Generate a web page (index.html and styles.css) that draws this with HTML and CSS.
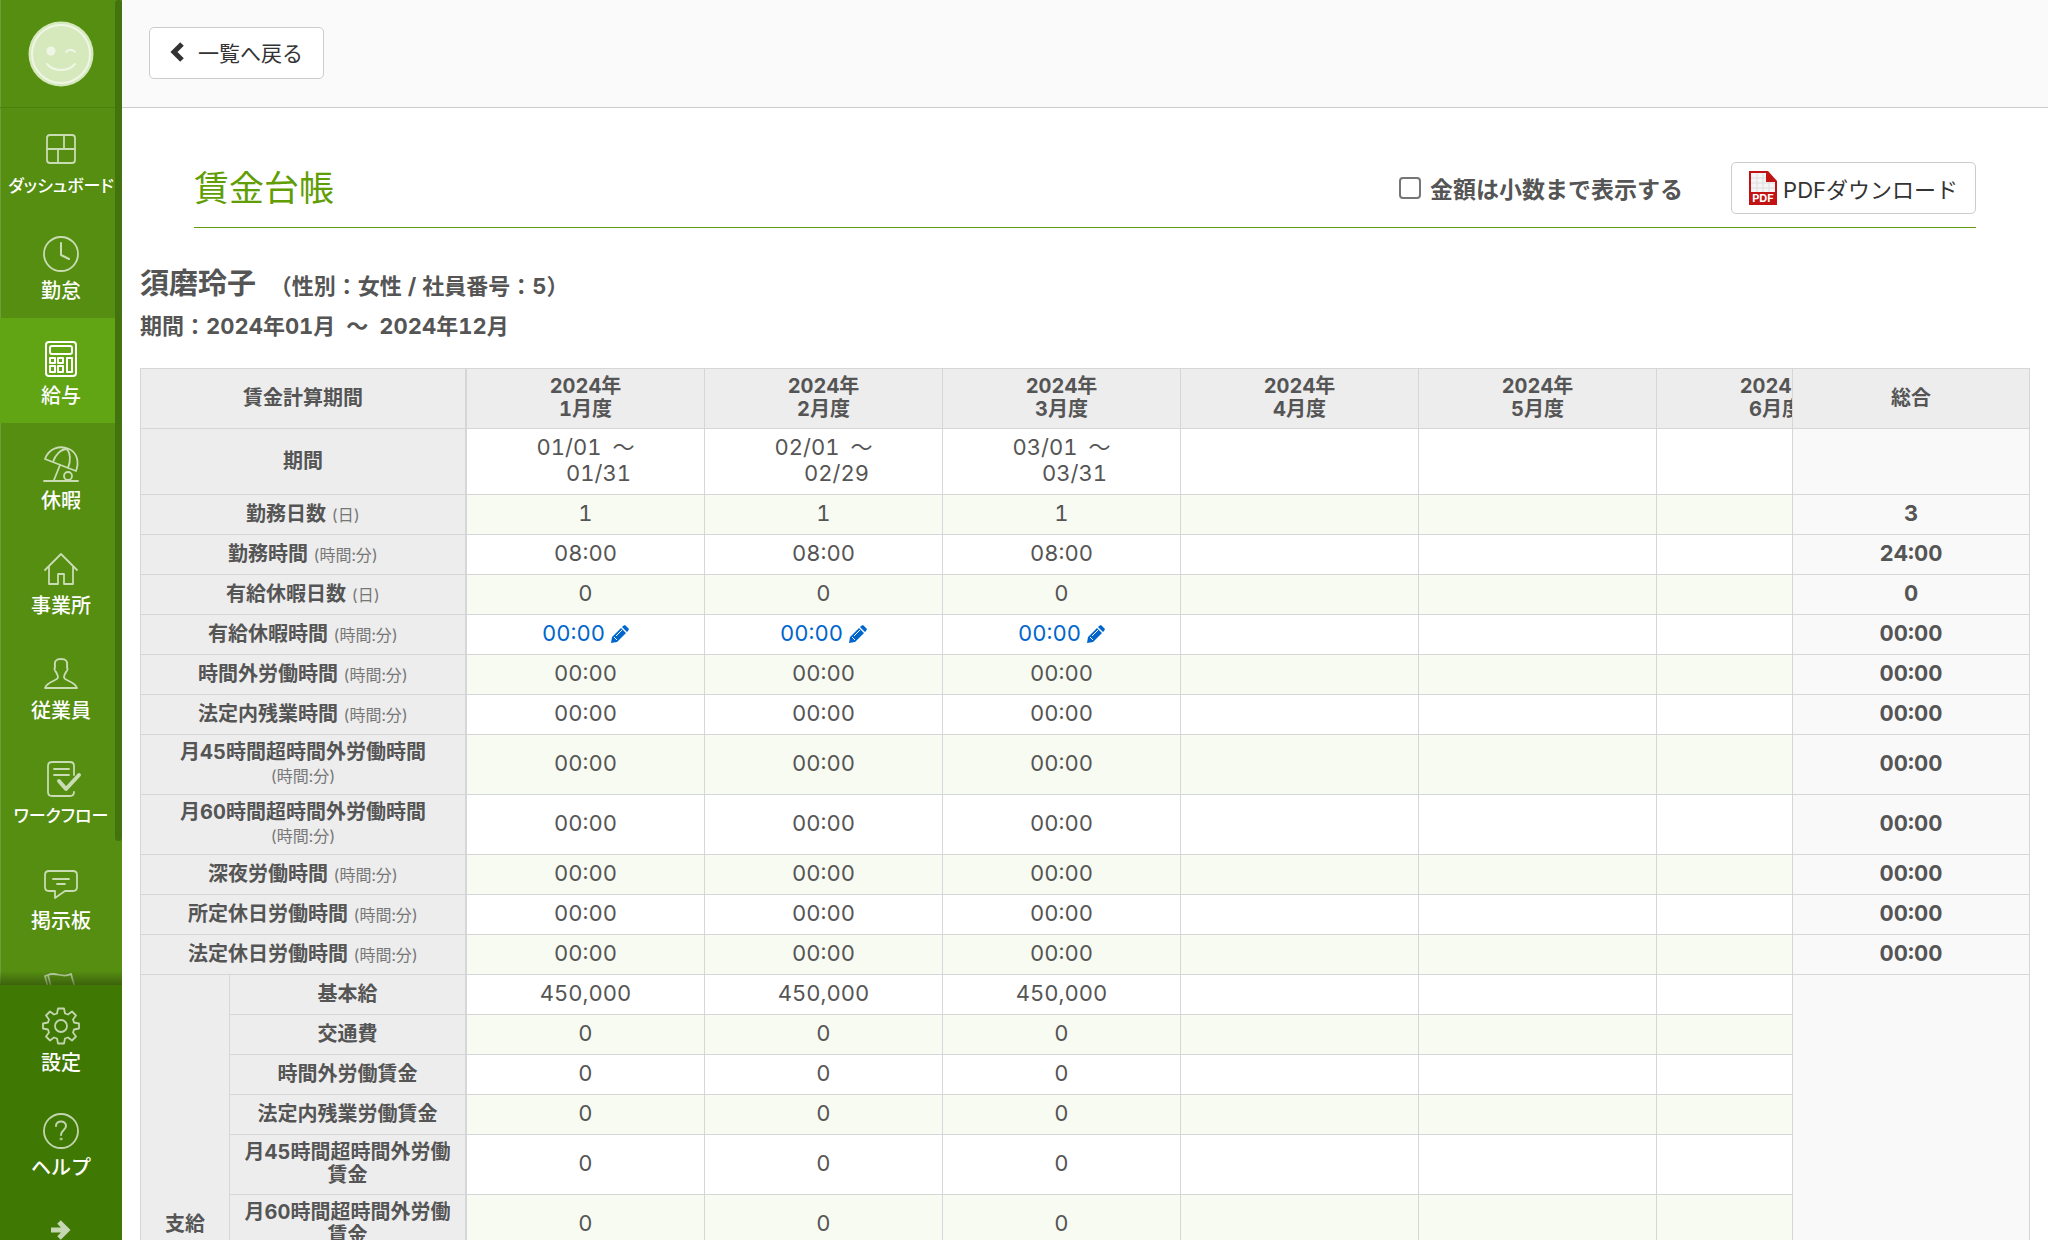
FILE: index.html
```html
<!DOCTYPE html>
<html lang="ja">
<head>
    <meta charset="UTF-8">
    <meta name="viewport" content="width=device-width, initial-scale=1.0">
    <title>賃金台帳</title>
    <link rel="stylesheet" href="styles.css">
</head>
<body>
<div class="container">
    <div class="sidebar">
        <div class="menu">
            <a class="user" href="#" aria-label="ユーザー">
                <svg width="66" height="66" viewBox="0 0 66 66" fill="none" stroke="#eff6e6" stroke-width="2" stroke-linecap="round">
                    <circle cx="33" cy="33" r="32.5" fill="#d6e9bd" stroke="none"/>
                    <circle cx="33" cy="33" r="29"/>
                    <circle cx="23" cy="30" r="4.5" fill="#eff6e6" stroke="none"/>
                    <path d="M38 31c2-3 7-3 9 0M19 43c7 8 21 8 28 0"/>
                </svg>
            </a>
            <a class="item" href="#">
                <svg class="icon" viewBox="0 0 36 36"><rect x="4" y="4" width="28" height="28" rx="3"/><path d="M4 18h28M21 4v14M15 18v14"/></svg>
                <span class="kana">ダッシュボード</span>
            </a>
            <a class="item" href="#">
                <svg class="icon" viewBox="0 0 36 36"><circle cx="18" cy="18" r="17"/><path d="M18 7v12l8 4" stroke-width="2"/></svg>
                <span>勤怠</span>
            </a>
            <a class="item active" href="#">
                <svg class="icon" viewBox="0 0 36 36"><rect x="3" y="1" width="30" height="34" rx="3"/><rect x="7" y="5" width="22" height="8" rx="2"/><rect x="7" y="17" width="5" height="5"/><rect x="15" y="17" width="5" height="5"/><rect x="7" y="25" width="5" height="6"/><rect x="15" y="25" width="5" height="6"/><rect x="24" y="17" width="5" height="14"/></svg>
                <span>給与</span>
            </a>
            <a class="item" href="#">
                <svg class="icon" viewBox="0 0 36 36"><path d="M2 13C6 2 17-1 26 3s10 14 7 22zM10 16C12 9 18 3 24 3M25 22c3-8 2-15-1-19M17 19l-6 15M1 35h34"/><circle cx="25" cy="30" r="4"/></svg>
                <span>休暇</span>
            </a>
            <a class="item" href="#">
                <svg class="icon" viewBox="0 0 36 36"><path d="M2 19L18 3l16 16M6 16v17h9V23h6v10h9V16"/></svg>
                <span>事業所</span>
            </a>
            <a class="item" href="#">
                <svg class="icon" viewBox="0 0 36 36"><path d="M18 3c-5 0-7 2-6 8-1 2 0 4 1 5 1 2 2 3 2 5 0 4-11 4-13 11h32c-2-7-13-7-13-11 0-2 1-3 2-5 1-1 2-3 1-5 1-6-1-8-6-8z"/></svg>
                <span>従業員</span>
            </a>
            <a class="item" href="#">
                <svg class="icon" viewBox="0 0 36 36"><path d="M31 14V5c0-3-1-4-4-4H9C6 1 5 2 5 5v26c0 3 1 4 4 4h18c3 0 4-1 4-4M11 8h15M11 14h15"/><path d="M16 20l7 8 13-14" stroke-width="4"/></svg>
                <span class="kana">ワークフロー</span>
            </a>
            <a class="item" href="#">
                <svg class="icon" viewBox="0 0 36 36"><path d="M6 5h24c3 0 4 1 4 4v12c0 3-1 4-4 4h-8l-10 7v-7H6c-3 0-4-1-4-4V9c0-3 1-4 4-4zM10 13h16M14 18h8"/></svg>
                <span>掲示板</span>
            </a>
            <a class="item" href="#" aria-label="申請">
                <svg class="icon" viewBox="0 0 36 36"><path d="M2 5l3-1 8 31-3 1zM5 4c8-4 14 4 23-1l5 17c-9 5-15-3-24 1"/></svg>
            </a>
            <div class="scroll-thumb"></div>
        </div>
        <div class="menu-bottom">
            <a class="item" href="#">
                <svg class="icon" viewBox="0 0 36 36"><circle cx="18" cy="18" r="6"/><path d="M15 0.5h6l1 5 3 1 4-3 4 4-3 4 1 3 5 1v5l-5 1-1 3 3 4-4 4-4-3-3 1-1 5h-6l-1-5-3-1-4 3-4-4 3-4-1-3-5-1v-5l5-1 1-3-3-4 4-4 4 3 3-1z"/></svg>
                <span>設定</span>
            </a>
            <a class="item" href="#">
                <svg class="icon" viewBox="0 0 36 36"><circle cx="18" cy="18" r="17"/><path d="M13 13c0-6 10-6 10 0 0 4-5 4-5 9" stroke-width="2"/><circle cx="18" cy="26" r="1" stroke-width="1"/></svg>
                <span>ヘルプ</span>
            </a>
            <button class="toggle" type="button" aria-label="メニューを開く">
                <svg width="20" height="20" viewBox="0 0 20 20" fill="none" stroke="#c6d7b3" stroke-width="5"><path d="M0 10h16M8 2l8 8-8 8"/></svg>
            </button>
        </div>
    </div>

    <div class="main">
        <div class="top">
            <button class="btn" type="button">
                <svg class="back-icon" width="14" height="20" viewBox="0 0 14 20" fill="none" stroke="#333" stroke-width="5"><path d="M12 2l-8 8 8 8"/></svg>
                一覧へ戻る
            </button>
        </div>
        <div class="content">
            <div class="title">
                <h1>賃金台帳</h1>
                <label class="check"><input type="checkbox">金額は小数まで表示する</label>
                <button class="btn pdf" type="button">
                    <svg width="28" height="34" viewBox="0 0 28 34">
                        <path d="M0 0h19l9 10v24H0z" fill="#c11313"/>
                        <path d="M2 2h15v9h9v10H2z" fill="#f5f5f5"/>
                        <path d="M2 7h15M2 12h24M2 17h24M8 2v19M14 2v19M20 11v10" stroke="#ddd"/>
                        <text x="14" y="31" text-anchor="middle" class="pdf-mark">PDF</text>
                    </svg>
                    PDFダウンロード
                </button>
            </div>
            <h2>須磨玲子 <small>（性別：女性 / 社員番号：5）</small></h2>
            <p class="period">期間：2024年01月&ensp;〜&ensp;2024年12月</p>
            <div class="table-wrap">
                <table>
                    <colgroup>
                        <col class="col-group">
                        <col class="col-label">
                        <col span="13" class="col-month">
                    </colgroup>
                    <thead>
                        <tr id="head">
                            <th class="label" colspan="2">賃金計算期間</th>
                        </tr>
                    </thead>
                    <tbody id="body"></tbody>
                </table>
            </div>
        </div>
    </div>
</div>
<script>
    var MONTHS = 12;
    var pen = '<svg class="pen" width="18" height="18" viewBox="0 0 18 18"><path d="M12 1l2-1 4 4-1 2-1 1-5-5zM10 3l5 5-9 9-6 1 1-6z"/><path d="M3 12l3 3M5 11l6-6" stroke="#fff"/></svg>';

    // name, unit, monthly value, total
    var works = [
        ["勤務日数", "日", "1", "3"],
        ["勤務時間", "時間:分", "08:00", "24:00"],
        ["有給休暇日数", "日", "0", "0"],
        ["有給休暇時間", "時間:分", "edit", "00:00"],
        ["時間外労働時間", "時間:分", "00:00", "00:00"],
        ["法定内残業時間", "時間:分", "00:00", "00:00"],
        ["月45時間超時間外労働時間", "時間:分", "00:00", "00:00"],
        ["月60時間超時間外労働時間", "時間:分", "00:00", "00:00"],
        ["深夜労働時間", "時間:分", "00:00", "00:00"],
        ["所定休日労働時間", "時間:分", "00:00", "00:00"],
        ["法定休日労働時間", "時間:分", "00:00", "00:00"]
    ];
    var pays = [
        ["基本給", "450,000"],
        ["交通費", "0"],
        ["時間外労働賃金", "0"],
        ["法定内残業労働賃金", "0"],
        ["月45時間超時間外労働賃金", "0"],
        ["月60時間超時間外労働賃金", "0"],
        ["深夜労働賃金", "0"],
        ["所定休日労働賃金", "0"],
        ["法定休日労働賃金", "0"],
        ["欠勤・遅刻・早退による控除", "0"],
        ["総支給額", "450,000"]
    ];
    var ends = ["01/31", "02/29", "03/31"];

    function months(value){
        var html = "";
        for(var i=0;i<MONTHS;i++){
            if(i>=ends.length){
                html += "<td></td>";
            }else if(value=="edit"){
                html += '<td><a href="#">00:00 ' + pen + "</a></td>";
            }else{
                html += "<td>" + value + "</td>";
            }
        }
        return html;
    }

    var head = "";
    for(var i=1;i<=MONTHS;i++){
        head += "<th>2024年<br>" + i + "月度</th>";
    }
    document.getElementById("head").innerHTML += head + '<th class="total">総合</th>';

    var rows = '<tr class="range"><th class="label" colspan="2">期間</th>';
    for(var m=0;m<MONTHS;m++){
        rows += m<ends.length ? "<td>" + ends[m].slice(0,2) + "/01&ensp;〜<br><span>" + ends[m] + "</span></td>" : "<td></td>";
    }
    rows += '<td class="total"></td></tr>';

    for(var w=0;w<works.length;w++){
        var r = works[w];
        rows += '<tr><th class="label" colspan="2">' + r[0] + " <small>(" + r[1] + ")</small></th>" + months(r[2]) + '<td class="total">' + r[3] + "</td></tr>";
    }
    for(var p=0;p<pays.length;p++){
        rows += "<tr>";
        if(p==0){
            rows += '<th class="group" rowspan="' + pays.length + '">支給</th>';
        }
        rows += '<th class="label">' + pays[p][0] + "</th>" + months(pays[p][1]);
        if(p==0){
            rows += '<td class="total" rowspan="' + pays.length + '"></td>';
        }
        rows += "</tr>";
    }
    document.getElementById("body").innerHTML = rows;
</script>
</body>
</html>
```
FILE: styles.css
```css
*{
    margin: 0;
    padding: 0;
    box-sizing: border-box;
}
body{
    font-family: Inter, "Noto Sans CJK JP", sans-serif;
    font-size: 22px;
    font-variant-numeric: tabular-nums;
    color: #555;
    background: #fff;
}
a{
    text-decoration: none;
}
.container{
    display: flex;
    height: 100vh;
    overflow: hidden;
}

/* sidebar */
.sidebar{
    flex: none;
    width: 122px;
    display: flex;
    flex-direction: column;
    background: #558e11;
    box-shadow: inset 1px 0 #6d9e38;
}
.menu{
    position: relative;
    flex: 1;
    min-height: 0;
    overflow: hidden;
}
.menu::after{
    content: "";
    position: absolute;
    left: 0;
    right: 0;
    bottom: 0;
    height: 14px;
    background: linear-gradient(rgba(50,80,10,0), rgba(50,80,10,0.7));
}
.user{
    display: flex;
    align-items: center;
    justify-content: center;
    height: 108px;
    border-bottom: 1px solid #4b820c;
}
.user svg{
    display: block;
}
.item{
    display: flex;
    flex-direction: column;
    align-items: center;
    gap: 7px;
    height: 105px;
    padding-top: 23px;
    color: #fff;
    font-size: 20px;
    font-weight: 500;
    line-height: 24px;
    white-space: nowrap;
}
.item.active{
    background: #61a414;
}
.kana{
    font-size: 17px;
    font-feature-settings: "palt";
}
.icon{
    flex: none;
    width: 36px;
    height: 36px;
    fill: none;
    stroke: #c9dcb3;
    stroke-width: 1.8;
    stroke-linejoin: round;
    stroke-linecap: round;
    overflow: visible;
}
.active .icon{
    stroke: #fff;
    stroke-width: 2;
}
.scroll-thumb{
    position: absolute;
    top: 0;
    right: 0;
    width: 7px;
    height: 841px;
    border-radius: 4px;
    background: #42730f;
}
.menu-bottom{
    flex: none;
    background: #3f7803;
}
.menu-bottom .icon{
    stroke: #c2d5ae;
}
.toggle{
    display: flex;
    justify-content: center;
    width: 100%;
    height: 45px;
    padding-top: 25px;
    border: 0;
    background: none;
}

/* main */
.main{
    flex: 1;
    min-width: 0;
    overflow: hidden;
}
.top{
    display: flex;
    align-items: center;
    height: 108px;
    padding: 0 27px 2px;
    background: #fafafa;
    border-bottom: 1px solid #ccc;
}
.btn{
    display: flex;
    align-items: center;
    height: 52px;
    padding: 0 20px 2px;
    border: 1px solid #ccc;
    border-radius: 5px;
    background: #fff;
    color: #333;
    font-family: inherit;
    font-size: 21px;
}
.back-icon{
    margin-right: 14px;
}
.content{
    padding: 54px 18px 18px;
}
.title{
    display: flex;
    align-items: center;
    margin: 0 54px;
    padding-bottom: 13px;
    border-bottom: 1px solid #659b11;
}
.title h1{
    flex: 1;
    color: #619d05;
    font-size: 35px;
    font-weight: 400;
    line-height: 52px;
}
.check{
    display: flex;
    align-items: center;
    font-size: 23px;
    font-weight: 700;
}
.check input{
    appearance: none;
    width: 22px;
    height: 22px;
    margin-right: 9px;
    border: 2px solid #767676;
    border-radius: 4px;
    background: #fff;
}
.pdf{
    gap: 6px;
    margin-left: 48px;
    padding: 0 17px;
    font-size: 22px;
}
.pdf-mark{
    fill: #fff;
    font-size: 11px;
    font-weight: 700;
}
h2{
    margin-top: 34px;
    font-size: 29px;
    line-height: 44px;
}
h2 small{
    margin-left: 6px;
    font-size: 22px;
}
.period{
    font-weight: 700;
    line-height: 36px;
    margin-bottom: 24px;
}

/* table */
.table-wrap{
    overflow: hidden;
    border-top: 1px solid #d5d6d7;
    border-left: 1px solid #d5d6d7;
}
table{
    width: 3420px;
    table-layout: fixed;
    border-collapse: separate;
    border-spacing: 0;
}
.col-group{
    width: 89px;
}
.col-label{
    width: 237px;
}
.col-month{
    width: 238px;
}
th, td{
    height: 40px;
    text-align: center;
    vertical-align: middle;
    border-right: 1px solid #d5d6d7;
    border-bottom: 1px solid #d5d6d7;
}
th{
    background: #ededed;
    font-size: 20px;
    line-height: 23px;
    padding: 6px 12px 7px;
}
thead th{
    height: 60px;
}
td{
    line-height: 26px;
    padding-bottom: 3px;
}
tbody tr:nth-child(even) td{
    background: #f8fbf1;
}
.label{
    border-right-width: 2px;
}
th small{
    color: #777;
    font-size: 16px;
    font-weight: 400;
    line-height: 16px;
    white-space: nowrap;
}
.range td{
    height: 66px;
}
.range span{
    padding-left: 26px;
}
.total{
    position: sticky;
    right: 0;
    font-weight: 700;
    border-left: 1px solid #d5d6d7;
}
tbody tr td.total{
    background: #f9f9f9;
}
td a{
    color: #0066cc;
}
.pen{
    fill: #0066cc;
    vertical-align: -2px;
}
```
